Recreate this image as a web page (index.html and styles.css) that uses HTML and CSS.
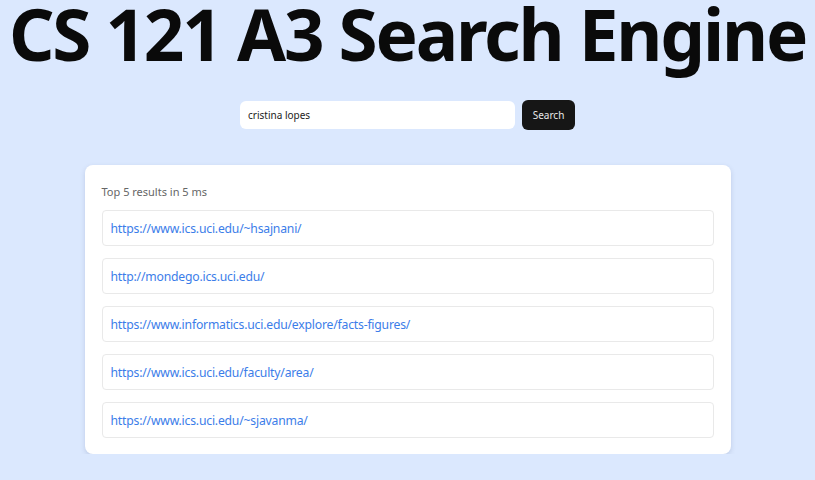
FILE: index.html
```html
<!DOCTYPE html>
<html>
<head>
<meta charset="utf-8">
<link rel="stylesheet" href="styles.css">
</head>
<body>
<h1 class="title">CS 121 A3 Search Engine</h1>
<form class="search">
  <input class="search-input" type="text" value="cristina lopes">
  <button class="search-btn" type="button">Search</button>
</form>
<div class="card">
  <p class="meta">Top 5 results in 5 ms</p>
  <ul class="results">
    <li class="result"><a href="#">https://www.ics.uci.edu/~hsajnani/</a></li>
    <li class="result"><a href="#">http://mondego.ics.uci.edu/</a></li>
    <li class="result"><a href="#">https://www.informatics.uci.edu/explore/facts-figures/</a></li>
    <li class="result"><a href="#">https://www.ics.uci.edu/faculty/area/</a></li>
    <li class="result"><a href="#">https://www.ics.uci.edu/~sjavanma/</a></li>
  </ul>
</div>
</body>
</html>
```
FILE: styles.css
```css
html, body {
  margin: 0;
  padding: 0;
}
body {
  background: #dbe8fe;
  font-family: "Noto Sans", "Open Sans", sans-serif;
  color: #111;
  overflow: hidden;
}
.title {
  margin: 0;
  font-family: "Noto Sans", sans-serif;
  font-weight: 700;
  font-size: 71px;
  line-height: 68px;
  text-align: center;
  white-space: nowrap;
  color: #0a0a0a;
  letter-spacing: -2.2px;
}
.search {
  display: flex;
  justify-content: center;
  align-items: center;
  gap: 7px;
  margin-top: 32px;
}
.search-input {
  width: 275px;
  height: 28px;
  box-sizing: border-box;
  border: none;
  border-radius: 6px;
  background: #fff;
  padding: 0 8px;
  font-family: "Noto Sans", sans-serif;
  font-size: 10px;
  color: #222;
  outline: none;
}
.search-btn {
  width: 53px;
  height: 30px;
  border: none;
  border-radius: 6px;
  background: #161616;
  color: #e8e8e8;
  font-family: "Noto Sans", sans-serif;
  font-size: 10px;
  padding: 0;
}
.card {
  width: 646px;
  box-sizing: border-box;
  margin: 35px auto 0;
  background: #fff;
  border-radius: 8px;
  padding: 16px 17px 16px;
  box-shadow: 0 2px 5px rgba(60, 80, 120, 0.18);
}
.meta {
  margin: 0 0 9px;
  font-size: 11px;
  line-height: 18px;
  color: #666;
  padding-top: 2px;
}
.results {
  list-style: none;
  margin: 0;
  padding: 0;
  display: flex;
  flex-direction: column;
  gap: 12px;
}
.result {
  height: 36px;
  box-sizing: border-box;
  border: 1px solid #e9e9e9;
  border-radius: 4px;
  padding: 0 8px;
  display: flex;
  align-items: center;
}
.result a {
  color: #3b7de9;
  text-decoration: none;
  font-size: 12.2px;
  letter-spacing: -0.2px;
}
```
